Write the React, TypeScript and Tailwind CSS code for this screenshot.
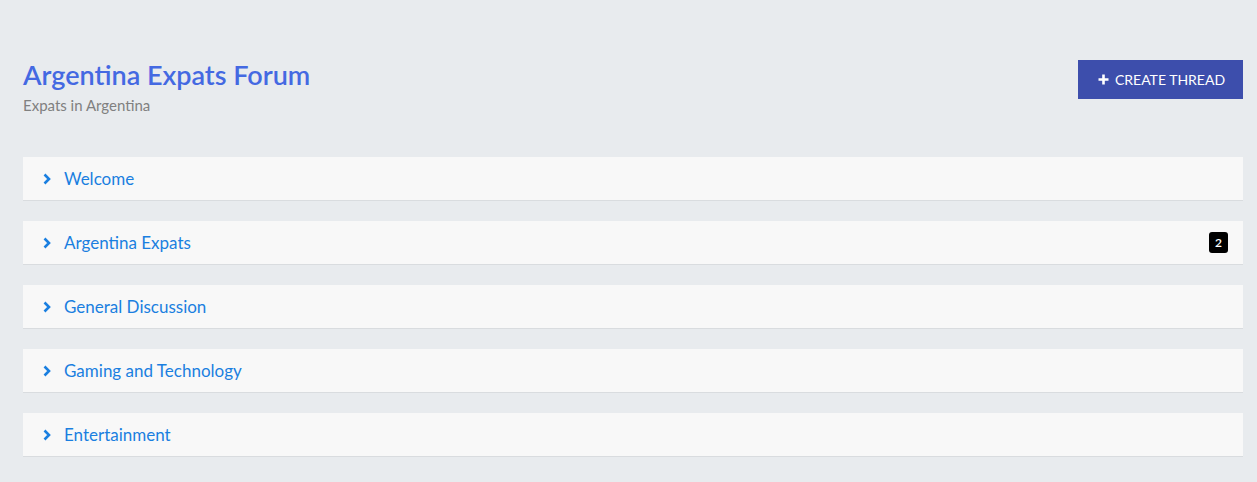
import React from "react";

const rows = [
  { name: "Welcome" },
  { name: "Argentina Expats", badge: "2" },
  { name: "General Discussion" },
  { name: "Gaming and Technology" },
  { name: "Entertainment" },
];

function Chevron() {
  return (
    <svg width="8" height="12" viewBox="0 0 8 12" className="shrink-0">
      <path d="M1.5 1.5 L6 6 L1.5 10.5" fill="none" stroke="#1a7fe0" strokeWidth="2.6" strokeLinejoin="miter" />
    </svg>
  );
}

export default function App() {
  return (
    <div
      className="min-h-[482px] w-full bg-[#e8ebee] px-[23px] pt-[60px]"
      style={{ fontFamily: "Lato, 'Open Sans', sans-serif" }}
    >
      <div className="flex items-start justify-between">
        <div>
          <h1 className="text-[27px] font-semibold leading-[30px] text-[#4469e2]">Argentina Expats Forum</h1>
          <div className="mt-[6px] text-[15px] leading-[18px] text-[#808080]">Expats in Argentina</div>
        </div>
        <button className="mr-[-9px] flex h-[39px] w-[165px] items-center justify-center gap-[6px] bg-[#3d4eac] pl-[2px] text-[14px] text-white">
          <svg width="11" height="11" viewBox="0 0 11 11">
            <path d="M5.5 0.5 V10.5 M0.5 5.5 H10.5" stroke="white" strokeWidth="2.6" />
          </svg>
          CREATE THREAD
        </button>
      </div>
      <div className="mr-[-9px] mt-[43px] flex flex-col gap-[20px]">
        {rows.map((r) => (
          <div
            key={r.name}
            className="flex h-[44px] items-center border-b border-[#d9dcdf] bg-[#f8f8f8] pl-[20px] pr-[15px]"
          >
            <Chevron />
            <span className="ml-[13px] text-[17px] text-[#1a7fe0]">{r.name}</span>
            {r.badge && (
              <span className="ml-auto flex h-[21px] w-[19px] items-center justify-center rounded-[3px] bg-black text-[12px] font-semibold text-white">
                {r.badge}
              </span>
            )}
          </div>
        ))}
      </div>
    </div>
  );
}
